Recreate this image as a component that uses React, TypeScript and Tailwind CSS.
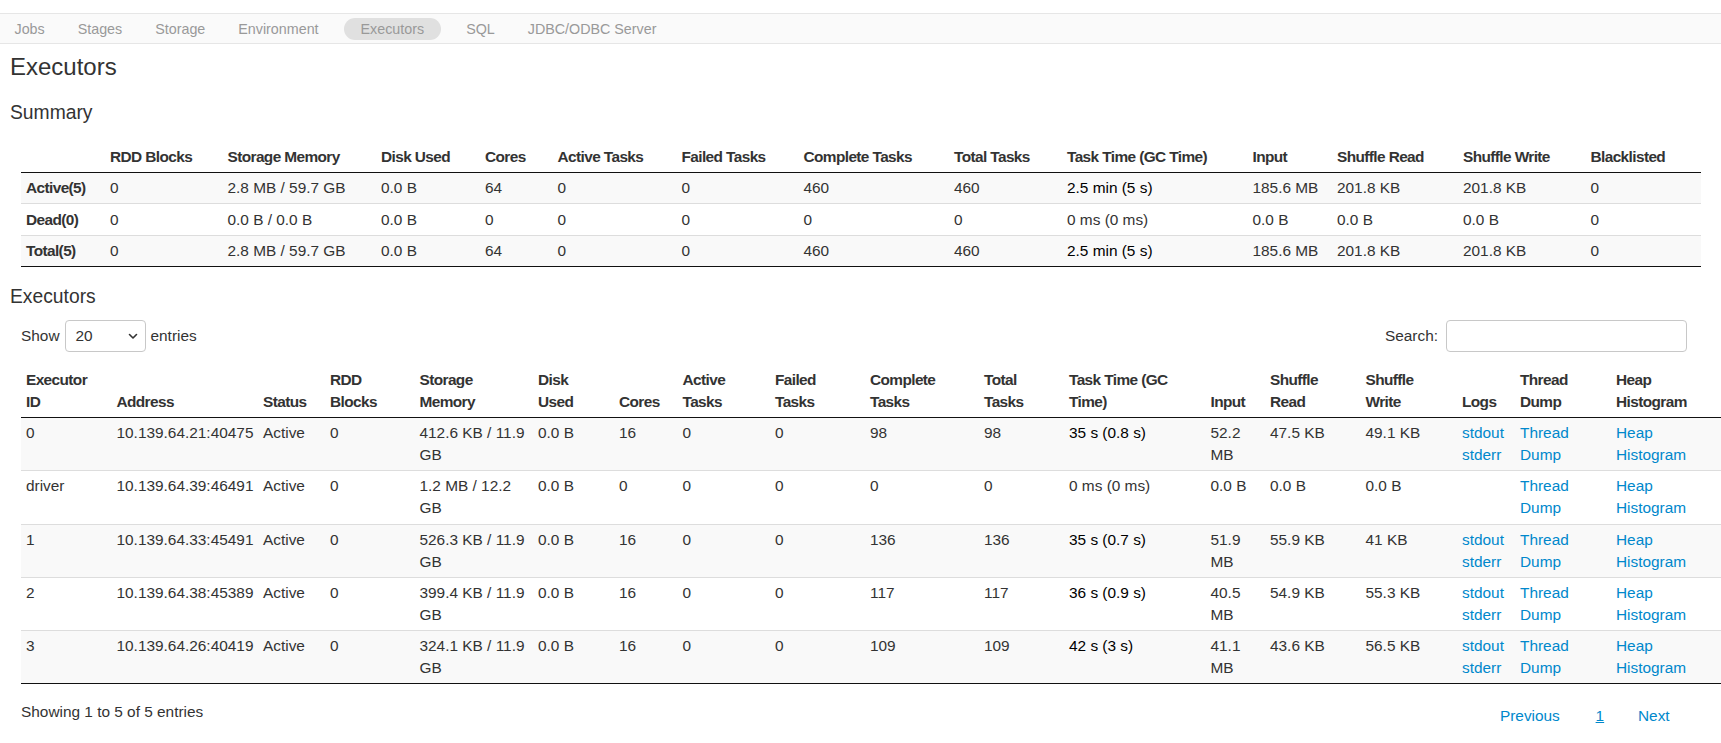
import React from "react";

const navItems = ["Jobs", "Stages", "Storage", "Environment", "Executors", "SQL", "JDBC/ODBC Server"];

const sumHeaders = ["", "RDD Blocks", "Storage Memory", "Disk Used", "Cores", "Active Tasks", "Failed Tasks", "Complete Tasks", "Total Tasks", "Task Time (GC Time)", "Input", "Shuffle Read", "Shuffle Write", "Blacklisted"];
const sumWidths = ["w-[84px]", "w-[117.5px]", "w-[153.5px]", "w-[104px]", "w-[72.5px]", "w-[124px]", "w-[122px]", "w-[150.5px]", "w-[113px]", "w-[185.5px]", "w-[84.5px]", "w-[126px]", "w-[127.5px]", "w-[115.5px]"];

type SumRow = { cells: string[]; dark: boolean };
const sumRows: SumRow[] = [
  { cells: ["Active(5)", "0", "2.8 MB / 59.7 GB", "0.0 B", "64", "0", "0", "460", "460", "2.5 min (5 s)", "185.6 MB", "201.8 KB", "201.8 KB", "0"], dark: true },
  { cells: ["Dead(0)", "0", "0.0 B / 0.0 B", "0.0 B", "0", "0", "0", "0", "0", "0 ms (0 ms)", "0.0 B", "0.0 B", "0.0 B", "0"], dark: false },
  { cells: ["Total(5)", "0", "2.8 MB / 59.7 GB", "0.0 B", "64", "0", "0", "460", "460", "2.5 min (5 s)", "185.6 MB", "201.8 KB", "201.8 KB", "0"], dark: true },
];

const exHeaders: string[][] = [
  ["Executor", "ID"], ["Address"], ["Status"], ["RDD", "Blocks"], ["Storage", "Memory"], ["Disk", "Used"], ["Cores"],
  ["Active", "Tasks"], ["Failed", "Tasks"], ["Complete", "Tasks"], ["Total", "Tasks"], ["Task Time (GC", "Time)"], ["Input"],
  ["Shuffle", "Read"], ["Shuffle", "Write"], ["Logs"], ["Thread", "Dump"], ["Heap", "Histogram"],
];
const exWidths = ["w-[90.5px]", "w-[146.5px]", "w-[67px]", "w-[89.5px]", "w-[118.5px]", "w-[81px]", "w-[63.5px]", "w-[92.5px]", "w-[95px]", "w-[114px]", "w-[85px]", "w-[141.5px]", "w-[59.5px]", "w-[95.5px]", "w-[96.5px]", "w-[58px]", "w-[96px]", "w-[110px]"];

type ExRow = { cells: string[]; dark: boolean; logs: boolean };
const exRows: ExRow[] = [
  { cells: ["0", "10.139.64.21:40475", "Active", "0", "412.6 KB / 11.9 GB", "0.0 B", "16", "0", "0", "98", "98", "35 s (0.8 s)", "52.2 MB", "47.5 KB", "49.1 KB"], dark: true, logs: true },
  { cells: ["driver", "10.139.64.39:46491", "Active", "0", "1.2 MB / 12.2 GB", "0.0 B", "0", "0", "0", "0", "0", "0 ms (0 ms)", "0.0 B", "0.0 B", "0.0 B"], dark: false, logs: false },
  { cells: ["1", "10.139.64.33:45491", "Active", "0", "526.3 KB / 11.9 GB", "0.0 B", "16", "0", "0", "136", "136", "35 s (0.7 s)", "51.9 MB", "55.9 KB", "41 KB"], dark: true, logs: true },
  { cells: ["2", "10.139.64.38:45389", "Active", "0", "399.4 KB / 11.9 GB", "0.0 B", "16", "0", "0", "117", "117", "36 s (0.9 s)", "40.5 MB", "54.9 KB", "55.3 KB"], dark: true, logs: true },
  { cells: ["3", "10.139.64.26:40419", "Active", "0", "324.1 KB / 11.9 GB", "0.0 B", "16", "0", "0", "109", "109", "42 s (3 s)", "41.1 MB", "43.6 KB", "56.5 KB"], dark: true, logs: true },
];

const link = "text-[#0088cc]";

export default function App() {
  return (
    <div
      className="min-h-screen w-full overflow-hidden bg-white text-[15.4px] leading-[22px] text-[#333]"
      style={{ fontFamily: '"Liberation Sans", Arial, Helvetica, sans-serif' }}
    >
      <div className="h-[13px]" />
      <nav className="flex h-[31px] items-center border-y border-[#e6e6e6] bg-[#fafafa] text-[14.3px] text-[#999]">
        <div className="-ml-[2px] flex items-center">
          {navItems.map((n) =>
            n === "Executors" ? (
              <span key={n} className="mx-[9px] rounded-full bg-[#e0e0e0] px-[16.5px] leading-[22px]">
                {n}
              </span>
            ) : (
              <span key={n} className="px-[16.5px] leading-[22px]">
                {n}
              </span>
            )
          )}
        </div>
      </nav>

      <div className="px-[10px]">
        <h3 className="mt-[10px] text-[24px] font-normal leading-[26px] text-[#333]">Executors</h3>
        <h4 className="mt-[22px] text-[19.3px] font-normal leading-[22px] text-[#333]">Summary</h4>

        <table className="ml-[11px] mt-[18px] w-[1680px] table-fixed border-separate border-spacing-0">
          <thead>
            <tr>
              {sumHeaders.map((h, i) => (
                <th
                  key={i}
                  className={`${sumWidths[i]} border-b border-b-[#111] px-[5px] py-[4px] text-left align-bottom font-bold tracking-[-0.6px]`}
                >
                  {h}
                </th>
              ))}
            </tr>
          </thead>
          <tbody>
            {sumRows.map((r, ri) => (
              <tr key={ri} className={ri % 2 === 0 ? "bg-[#f9f9f9]" : "bg-white"}>
                {r.cells.map((c, ci) => (
                  <td
                    key={ci}
                    className={[
                      "px-[5px] py-[4.2px] align-top",
                      ri > 0 ? "border-t border-t-[#ddd]" : "",
                      ri === sumRows.length - 1 ? "border-b border-b-[#111]" : "",
                      ci === 0 ? "font-bold tracking-[-0.6px]" : "",
                      ci === 9 && r.dark ? "text-black" : "",
                    ].join(" ")}
                  >
                    {c}
                  </td>
                ))}
              </tr>
            ))}
          </tbody>
        </table>

        <h4 className="mt-[19px] text-[19.3px] font-normal leading-[22px] text-[#333]">Executors</h4>

        <div className="ml-[11px] mt-[12px] w-[1666px]">
          <div className="flex h-[32px] items-center justify-between">
            <div className="flex items-center">
              <span>Show</span>
              <div className="ml-[5px] flex h-[32px] w-[81px] items-center justify-between rounded-[4px] border border-[#c8c8c8] bg-white pl-[10px] pr-[7px]">
                <span>20</span>
                <svg width="10" height="7" viewBox="0 0 10 7" fill="none">
                  <path d="M1.5 1.5 L5 5 L8.5 1.5" stroke="#333" strokeWidth="1.6" strokeLinecap="round" strokeLinejoin="round" />
                </svg>
              </div>
              <span className="ml-[5px]">entries</span>
            </div>
            <div className="flex items-center">
              <span>Search:</span>
              <div className="ml-[8px] h-[32px] w-[241px] rounded-[4px] border border-[#c8c8c8] bg-white" />
            </div>
          </div>

          <table className="mt-[13px] w-[1700px] table-fixed border-separate border-spacing-0">
            <thead>
              <tr>
                {exHeaders.map((h, i) => (
                  <th
                    key={i}
                    className={`${exWidths[i]} border-b border-b-[#111] px-[5px] py-[4px] text-left align-bottom font-bold tracking-[-0.6px] whitespace-nowrap`}
                  >
                    {h.map((line, li) => (
                      <div key={li}>{line}</div>
                    ))}
                  </th>
                ))}
              </tr>
            </thead>
            <tbody>
              {exRows.map((r, ri) => {
                const base = [
                  "px-[5px] py-[4.1px] align-top",
                  ri > 0 ? "border-t border-t-[#ddd]" : "",
                  ri === exRows.length - 1 ? "border-b border-b-[#111]" : "",
                ].join(" ");
                return (
                  <tr key={ri} className={ri % 2 === 0 ? "bg-[#f9f9f9]" : "bg-white"}>
                    {r.cells.map((c, ci) => (
                      <td
                        key={ci}
                        className={`${base} ${ci === 1 ? "whitespace-nowrap" : ""} ${ci === 11 && r.dark ? "text-black" : ""}`}
                      >
                        {c}
                      </td>
                    ))}
                    <td className={base}>
                      {r.logs ? (
                        <>
                          <div className={link}>stdout</div>
                          <div className={link}>stderr</div>
                        </>
                      ) : null}
                    </td>
                    <td className={`${base} ${link}`}>Thread Dump</td>
                    <td className={`${base} ${link}`}>Heap Histogram</td>
                  </tr>
                );
              })}
            </tbody>
          </table>

          <div className="flex items-start justify-between">
            <div className="mt-[17px]">Showing 1 to 5 of 5 entries</div>
            <div className="mr-[2px] mt-[13px] flex items-center">
              <span className={`${link} px-[15.4px] py-[7.7px]`}>Previous</span>
              <span className={`${link} ml-[5px] px-[15.4px] py-[7.7px] underline`}>1</span>
              <span className={`${link} ml-[3px] px-[15.4px] py-[7.7px]`}>Next</span>
            </div>
          </div>
        </div>
      </div>
    </div>
  );
}
